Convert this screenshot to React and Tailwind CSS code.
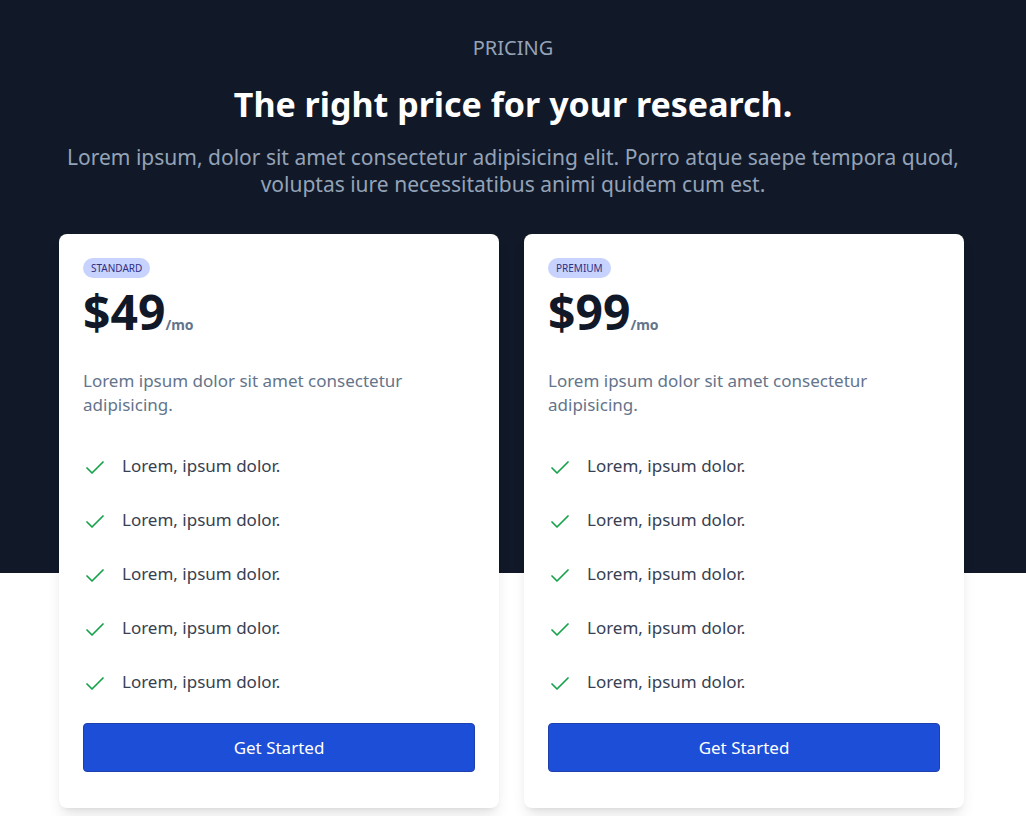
import { Check } from 'lucide-react';

const plans = [
    { tier: 'STANDARD', price: '$49' },
    { tier: 'PREMIUM', price: '$99' },
];

const features = ['Lorem, ipsum dolor.', 'Lorem, ipsum dolor.', 'Lorem, ipsum dolor.', 'Lorem, ipsum dolor.', 'Lorem, ipsum dolor.'];

function PlanCard({ plan }) {
    return (
        <div className="bg-white rounded-lg shadow-lg px-6 pt-6 pb-9">
            <span className="block w-fit rounded-full bg-[#c7d2fe] px-2 text-[10px] leading-5 text-[#312e81]">{plan.tier}</span>
            <div className="mt-[10px] flex items-baseline">
                <span className="text-5xl leading-[48px] font-bold text-[#111827]">{plan.price}</span>
                <span className="text-sm font-bold text-[#64748b]">/mo</span>
            </div>
            <p className="mt-[33px] text-[17px] leading-6 text-[#64748b]">Lorem ipsum dolor sit amet consectetur adipisicing.</p>
            <ul className="mt-[35px] flex flex-col gap-[26px]">
                {features.map((f, i) => (
                    <li key={i} className="flex items-center gap-[15px] text-[17px] leading-7 text-[#374151]">
                        <Check className="w-6 h-6 mt-1 text-[#16a34a]" strokeWidth={1.75} />
                        {f}
                    </li>
                ))}
            </ul>
            <button className="mt-[27px] w-full h-[49px] rounded bg-[#1d4ed8] text-white text-[17px] border border-[#1e40af]">Get Started</button>
        </div>
    );
}

export default function App() {
    return (
        <div className="min-h-screen font-['Segoe_UI','Noto_Sans',sans-serif] bg-[linear-gradient(to_bottom,#111827_573px,#ffffff_573px)]">
            <div className="pt-[34px] text-center">
                <p className="text-xl leading-7 text-[#94a3b8]">PRICING</p>
                <h1 className="mt-[22px] text-[34px] leading-10 font-bold text-white">The right price for your research.</h1>
                <p className="mt-5 mx-auto max-w-[920px] text-[21px] leading-[27px] text-[#94a3b8]">Lorem ipsum, dolor sit amet consectetur adipisicing elit. Porro atque saepe tempora quod, voluptas iure necessitatibus animi quidem cum est.</p>
            </div>
            <div className="mt-[36px] ml-[59px] w-[905px] grid grid-cols-2 gap-[25px] pb-10">
                {plans.map(p => <PlanCard key={p.tier} plan={p} />)}
            </div>
        </div>
    );
}
